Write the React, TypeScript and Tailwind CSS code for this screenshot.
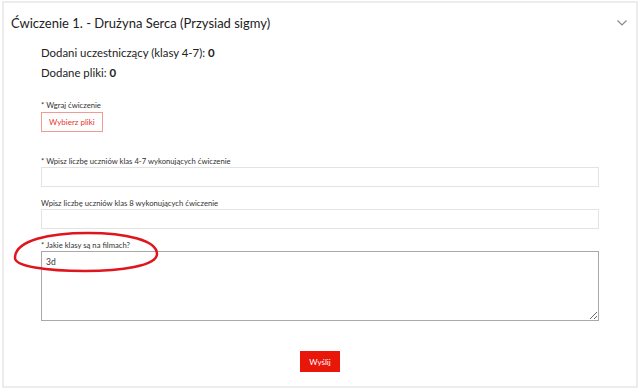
const font = { fontFamily: 'Lato, "Open Sans", sans-serif' };

export default function App() {
  return (
    <div className="relative w-[640px] h-[389px] bg-white pt-px px-[2px]" style={font}>
      <div className="h-[387px] border-2 border-[#ececec] bg-white">
        {/* header */}
        <div className="flex items-center justify-between pl-[7px] pr-[9px] pt-[10px]">
          <h2 className="text-[13px] leading-[20px] text-[#222]">Ćwiczenie 1. - Drużyna Serca (Przysiad sigmy)</h2>
          <svg width="10" height="6" viewBox="0 0 10 6" className="mt-[-1px]">
            <polyline points="0.5,0.5 5,5 9.5,0.5" fill="none" stroke="#888" strokeWidth="1.2" />
          </svg>
        </div>

        <div className="pl-[37px] pr-[37px]">
          <p className="mt-[10px] text-[11.4px] leading-[20px] text-[#222]">
            Dodani uczestniczący (klasy 4-7): <b>0</b>
          </p>
          <p className="text-[11.4px] leading-[20px] text-[#222]">
            Dodane pliki: <b>0</b>
          </p>

          <label className="block mt-[16px] text-[7.7px] leading-[12px] text-[#333]">* Wgraj ćwiczenie</label>
          <button className="block mt-[1px] h-[20px] px-[7px] border border-[#f29b8f] text-[8px] text-[#e8341f] bg-white">
            Wybierz pliki
          </button>

          <label className="block mt-[23px] text-[7.7px] leading-[12px] text-[#333]">
            * Wpisz liczbę uczniów klas 4-7 wykonujących ćwiczenie
          </label>
          <input className="block w-full h-[20px] border border-[#e3e3e3] outline-none" />

          <label className="block mt-[10px] text-[7.7px] leading-[12px] text-[#333]">
            Wpisz liczbę uczniów klas 8 wykonujących ćwiczenie
          </label>
          <input className="block w-full h-[20px] border border-[#e3e3e3] outline-none" />

          <label className="block mt-[10px] text-[7.7px] leading-[12px] text-[#333]">* Jakie klasy są na filmach?</label>
          <textarea
            className="block w-full h-[70px] border border-[#a9a9a9] px-[4px] py-[3px] text-[8.5px] leading-[14px] text-[#333] outline-none resize-y"
            defaultValue="3d"
          />

          <div className="flex justify-center mt-[30px]">
            <button className="block h-[21px] w-[40px] bg-[#e8170a] text-white text-[8px]">Wyślij</button>
          </div>
        </div>
      </div>

      {/* hand-drawn highlight */}
      <svg className="absolute inset-0 pointer-events-none" width="640" height="389" viewBox="0 0 640 389">
        <path
          d="M15,258 C15,240 50,233 88,233 C125,233 157,240 157,254 C157,266 120,271 85,271 C45,271 15,266 15,258 Z"
          fill="none"
          stroke="#e0161e"
          strokeWidth="2.5"
        />
      </svg>
    </div>
  );
}
